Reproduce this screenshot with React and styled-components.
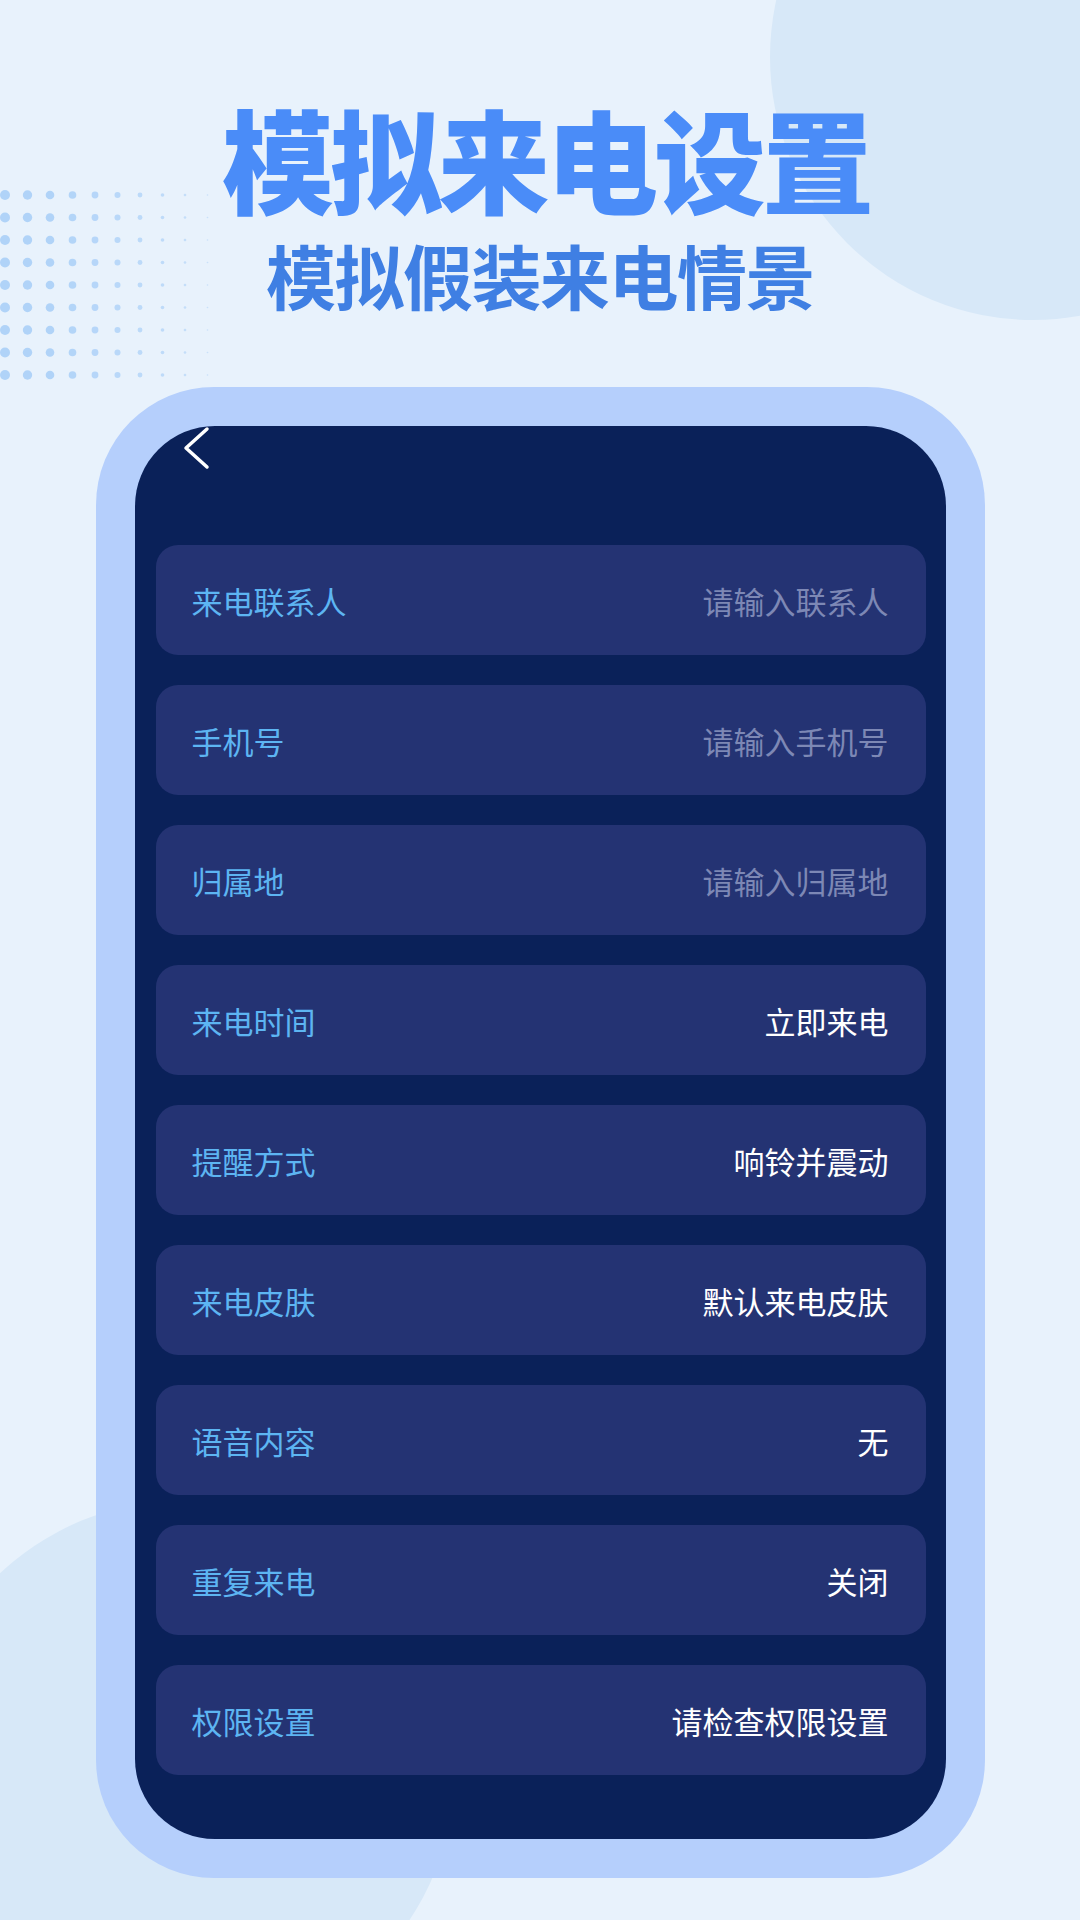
import React from "react";
import styled, { createGlobalStyle } from "styled-components";

const GlobalStyle = createGlobalStyle`
  html, body {
    margin: 0;
    padding: 0;
    background: #e8f2fc;
  }
  body {
    font-family: "Noto Sans CJK SC", "Noto Sans", sans-serif;
  }
`;

const Page = styled.div`
  position: relative;
  width: 1080px;
  height: 1920px;
  overflow: hidden;
  background: #e8f2fc;
  display: flex;
  flex-direction: column;
  align-items: center;
`;

const Blob = styled.div`
  position: absolute;
  left: ${props => props.x}px;
  top: ${props => props.y}px;
  width: ${props => props.size}px;
  height: ${props => props.size}px;
  border-radius: 50%;
  background: #d7e8f8;
`;

const DotsArt = styled.svg`
  position: absolute;
  left: 0;
  top: 190px;
`;

const Title = styled.h1`
  position: relative;
  margin: 90px 0 0 12px;
  font-size: 112px;
  line-height: 1.2;
  font-weight: 900;
  letter-spacing: -4px;
  color: #4a8cf8;
`;

const Subtitle = styled.h2`
  position: relative;
  margin: 9px 0 0;
  font-size: 70px;
  line-height: 1.2;
  font-weight: 700;
  letter-spacing: -1.5px;
  color: #3f7fe3;
`;

const Frame = styled.div`
  position: relative;
  margin-top: 70px;
  width: 889px;
  padding: 39px;
  box-sizing: border-box;
  border-radius: 118px;
  background: #b5cffc;
`;

const Screen = styled.div`
  height: 1413px;
  box-sizing: border-box;
  border-radius: 80px;
  background: #0a2159;
  padding: 0 20px 64px 21px;
  display: flex;
  flex-direction: column;
  overflow: hidden;
`;

const Header = styled.div`
  height: 119px;
  display: flex;
  align-items: flex-start;
  padding-left: 27px;
`;

const Rows = styled.div`
  display: flex;
  flex-direction: column;
  gap: 30px;
`;

const Row = styled.div`
  height: 110px;
  display: flex;
  align-items: center;
  justify-content: space-between;
  padding: 0 37px 0 36px;
  border-radius: 22px;
  background: #243373;
  font-size: 31px;
  line-height: 1;
`;

const Label = styled.span`
  color: #5db5f2;
`;

const Value = styled.span`
  color: ${props => (props.placeholder ? "#7d88b5" : "#ffffff")};
`;

const BackIcon = () => (
  <svg width="28" height="44" viewBox="0 0 28 44">
    <path
      d="M24 3 L3 22 L24 41"
      fill="none"
      stroke="#ffffff"
      strokeWidth="3.5"
      strokeLinecap="round"
      strokeLinejoin="round"
    />
  </svg>
);

const dotRadii = [5, 4.7, 4.3, 3.8, 3.4, 3, 2.4, 1.8, 1.3, 0.8];
const dotOpacity = [1, 1, 1, 0.95, 0.9, 0.85, 0.8, 0.75, 0.65, 0.55];

const Dots = () => (
  <DotsArt width="212" height="190" viewBox="0 0 212 190">
    {Array.from({ length: 9 }).map((_, r) =>
      dotRadii.map((rad, c) => (
        <circle
          key={`${r}-${c}`}
          cx={5 + c * 22.5}
          cy={5 + r * 22.5}
          r={rad}
          fill="#b0d3f8"
          opacity={dotOpacity[c]}
        />
      ))
    )}
  </DotsArt>
);

const fields = [
  { label: "来电联系人", value: "请输入联系人", placeholder: true },
  { label: "手机号", value: "请输入手机号", placeholder: true },
  { label: "归属地", value: "请输入归属地", placeholder: true },
  { label: "来电时间", value: "立即来电" },
  { label: "提醒方式", value: "响铃并震动" },
  { label: "来电皮肤", value: "默认来电皮肤" },
  { label: "语音内容", value: "无" },
  { label: "重复来电", value: "关闭" },
  { label: "权限设置", value: "请检查权限设置" },
];

const App = () => {
  return (
    <Page>
      <GlobalStyle />
      <Blob x={770} y={-206} size={526} />
      <Blob x={-85} y={1500} size={540} />
      <Dots />
      <Title>模拟来电设置</Title>
      <Subtitle>模拟假装来电情景</Subtitle>
      <Frame>
        <Screen>
          <Header>
            <BackIcon />
          </Header>
          <Rows>
            {fields.map(f => (
              <Row key={f.label}>
                <Label>{f.label}</Label>
                <Value placeholder={f.placeholder ? 1 : 0}>{f.value}</Value>
              </Row>
            ))}
          </Rows>
        </Screen>
      </Frame>
    </Page>
  );
};

export default App;
